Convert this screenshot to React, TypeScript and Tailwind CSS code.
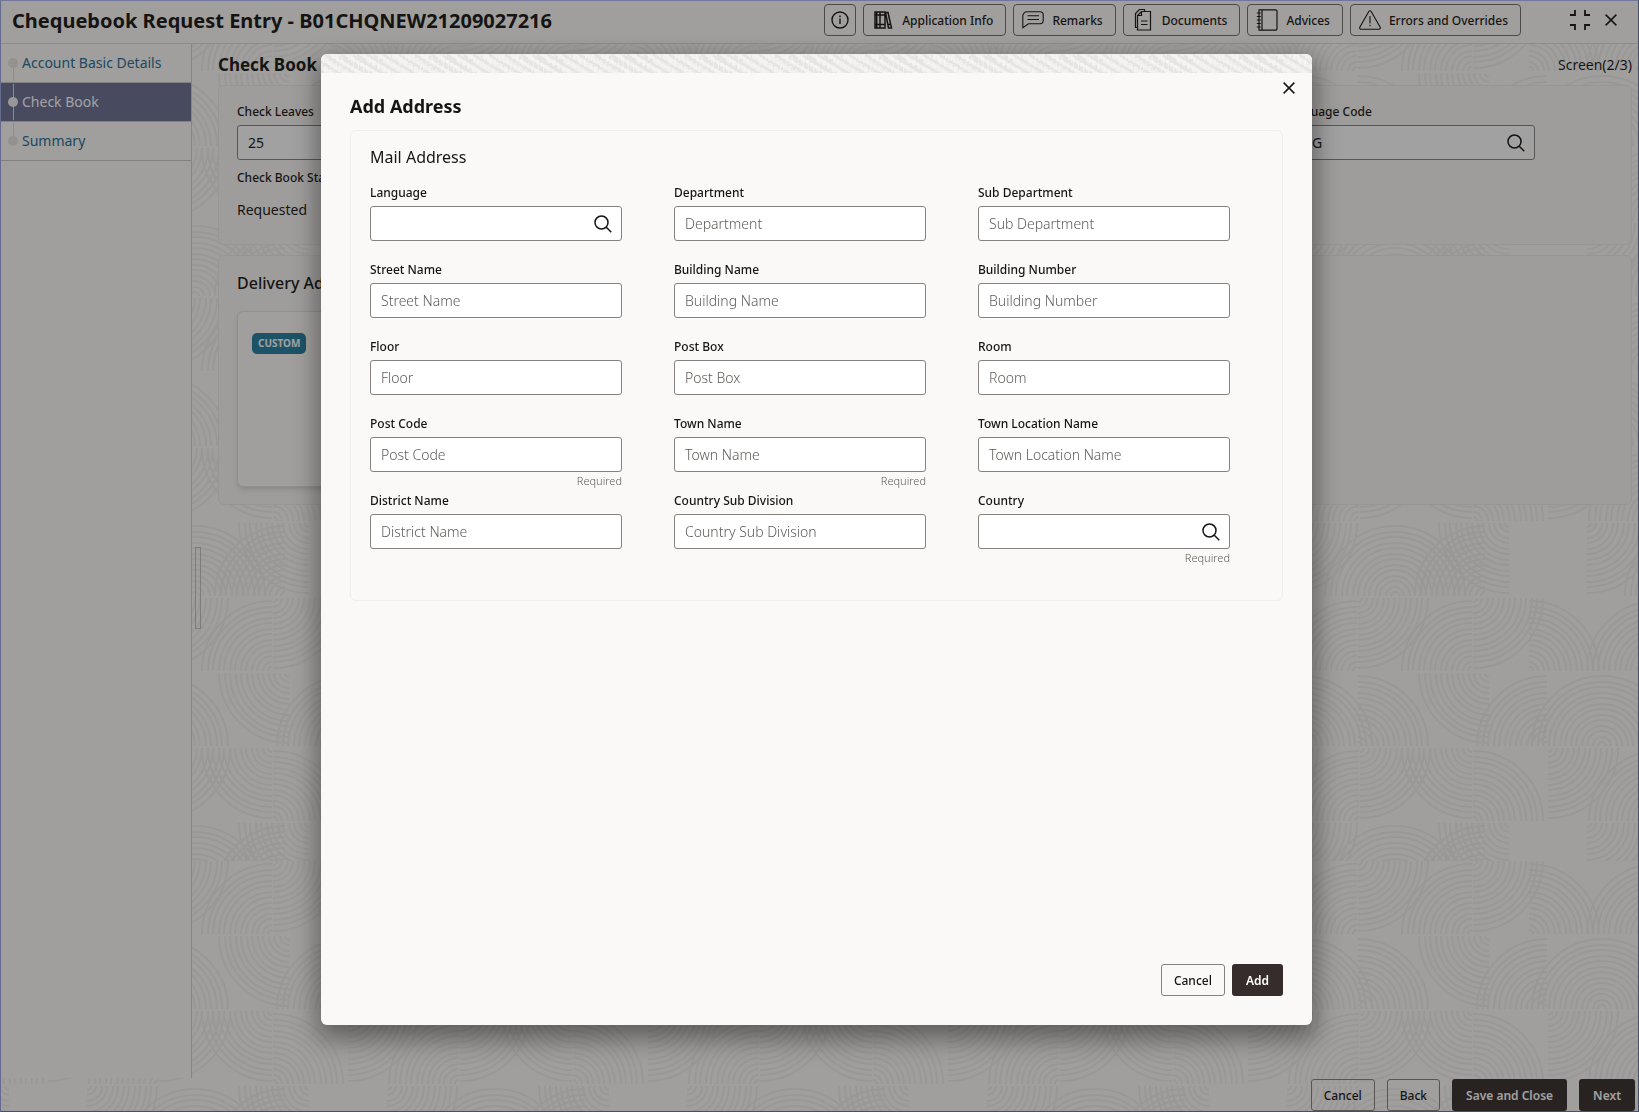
import { useState } from "react";
import type { ReactNode } from "react";

type Corner = "tl" | "tr" | "bl" | "br";

// one 300x300 wallpaper tile: four rows of quarter circles, [x of centre, corner]
const FAN_ROWS: [number, Corner][][] = [
  [[87, "tl"], [195, "br"], [195, "bl"], [9, "tr"], [285, "br"]],
  [[157, "br"], [158, "tl"], [272, "br"], [273, "tl"], [29, "bl"]],
  [[102, "bl"], [158, "bl"], [289, "tr"], [47, "br"], [102, "br"]],
  [[159, "br"], [160, "tl"], [272, "tr"], [273, "bl"], [48, "tl"]],
];
const RADII = [4, 9, 15, 20, 26, 31, 37, 42, 48, 53, 59, 64, 70];

const fanPath = (x: number, y: number, corner: Corner) => {
  const sx = corner[1] === "l" ? 1 : -1;
  const sy = corner[0] === "t" ? 1 : -1;
  const cy = corner[0] === "t" ? y : y + 73;
  const sweep = sx * sy > 0 ? 1 : 0;
  return RADII.map((r) => `M${x + sx * r} ${cy}A${r} ${r} 0 0 ${sweep} ${x} ${cy + sy * r}`).join("");
};

const WALLPAPER = FAN_ROWS.map((row, i) =>
  row.map(([x, c]) => [x - 300, x, x + 300].map((px) => fanPath(px, i * 75, c)).join("")).join("")
).join("");

const Wallpaper = () => (
  <svg className="absolute inset-0 h-full w-full" aria-hidden="true">
    <defs>
      <pattern id="fans-top" x="-1" y="179" width="300" height="300" patternUnits="userSpaceOnUse">
        <path d={WALLPAPER} fill="none" stroke="#f1f1ee" strokeWidth="2" />
      </pattern>
      <pattern id="fans-bottom" x="-1" y="742" width="300" height="300" patternUnits="userSpaceOnUse">
        <path d={WALLPAPER} fill="none" stroke="#f1f1ee" strokeWidth="2" />
      </pattern>
    </defs>
    <rect width="100%" height="817" fill="url(#fans-top)" />
    <rect y="817" width="100%" height="100%" fill="url(#fans-bottom)" />
  </svg>
);

const strokes = (count: number, seed: number) =>
  Array.from({ length: count }, (_, i) => {
    const x = (i * 37 + seed) % 90;
    const y = ((i * 7919 + seed * 31) % 101) % 19;
    return `M${x} ${y}v${3 + (i % 3)}`;
  }).join("");

const TextureStrip = () => (
  <svg className="h-[19px] w-full shrink-0" aria-hidden="true">
    <defs>
      <pattern id="strip" width="90" height="19" patternUnits="userSpaceOnUse">
        <rect width="90" height="19" fill="#f0efed" />
        <path d={strokes(170, 0)} stroke="#e6e5e3" strokeWidth="2" fill="none" />
        <path d={strokes(130, 11)} stroke="#f9f8f6" strokeWidth="1" fill="none" />
      </pattern>
    </defs>
    <rect width="100%" height="100%" fill="url(#strip)" />
  </svg>
);

const InfoIcon = () => (
  <svg width="18" height="18" viewBox="0 0 18 18" fill="none" stroke="#161513" strokeWidth="1.4">
    <circle cx="9" cy="9" r="8" />
    <path d="M9 7.5v5.5M9 4.6v1.6" />
  </svg>
);

const BooksIcon = () => (
  <svg width="20" height="20" viewBox="0 0 20 20" fill="none" stroke="#161513" strokeWidth="1.5">
    <path d="M2 2h5v16H2zM7 2h5v16H7zM2 5h10M2 14.500h10M3.700 2v16M12.500 2.500h2.500L18.500 18H15.500zM15.500 14.500h2.500" />
  </svg>
);

const RemarksIcon = () => (
  <svg width="22" height="18" viewBox="0 0 22 18" fill="none" stroke="#161513" strokeWidth="1.1">
    <path d="M5 .8h13a3.200 3.200 0 0 1 3.200 3.200v5.500a3.200 3.200 0 0 1-3.200 3.200H6.500L.8 16.800V5A4.200 4.200 0 0 1 5 .8z" />
    <path d="M5.500 4.800h11.500M5.500 8.500h11.500" />
  </svg>
);

const DocumentsIcon = () => (
  <svg width="18" height="22" viewBox="0 0 18 22" fill="none" stroke="#161513" strokeWidth="1.2">
    <path d="M7.500 2.500h9v18.500h-13V6.500zM7.500 2.500v4h-4M3.500 18.500h-2V4.500l4-4h5v2M7 12h6.500M7 15.500h6.500" />
  </svg>
);

const AdvicesIcon = () => (
  <svg width="22" height="22" viewBox="0 0 22 22" fill="none" stroke="#161513" strokeWidth="1.2">
    <path d="M3 .8h16.500a1.500 1.500 0 0 1 1.500 1.500v17.400a1.500 1.500 0 0 1-1.500 1.500H3zM6 .8v20.400M.8 4h4M.8 7.500h4M.8 11h4M.8 14.500h4M.8 18h4" />
  </svg>
);

const WarningIcon = () => (
  <svg width="22" height="20" viewBox="0 0 22 20" fill="none" stroke="#161513" strokeWidth="1.1">
    <path d="M9.800 1.500a1.400 1.400 0 0 1 2.400 0l9 15.800a1.300 1.300 0 0 1-1.100 1.900H1.900a1.300 1.300 0 0 1-1.100-1.900zM11 6v7.500M11 14.800v1.500" />
  </svg>
);

const CollapseIcon = () => (
  <svg width="20" height="20" viewBox="0 0 20 20" fill="none" stroke="#161513" strokeWidth="1.8">
    <path d="M5 0v5H0M15 0v5h5M5 20v-5H0M15 20v-5h5" />
  </svg>
);

const CloseIcon = () => (
  <svg width="12" height="12" viewBox="0 0 12 12" stroke="#161513" strokeWidth="1.5">
    <path d="M.6 .6l10.800 10.800M11.400 .6L.6 11.400" />
  </svg>
);

const SearchIcon = () => (
  <svg width="18" height="18" viewBox="0 0 18 18" fill="none" stroke="#161513" strokeWidth="1.5">
    <circle cx="7.500" cy="7.500" r="6.500" />
    <path d="M12 12l5.300 5.300" />
  </svg>
);

interface FieldProps {
  id: string;
  label: string;
  placeholder?: string;
  value?: string;
  search?: boolean;
  required?: boolean;
}

const Field = ({ id, label, placeholder, value = "", search, required }: FieldProps) => {
  const [text, setText] = useState(value);
  return (
    <div className="w-[252px]">
      <label htmlFor={id} className="block h-[22px] text-xs leading-[18px] font-medium">
        {label}
      </label>
      <div className="flex h-[35px] items-center rounded-[3px] border border-[#85817e] bg-white">
        <input
          id={id}
          value={text}
          placeholder={placeholder}
          onChange={(e) => setText(e.target.value)}
          className="h-full min-w-0 flex-1 bg-transparent px-2.5 text-sm outline-none placeholder:font-light placeholder:text-[#5f5c59]"
        />
        {search && (
          <button type="button" aria-label={`Search ${label}`} className="mr-[9px]">
            <SearchIcon />
          </button>
        )}
      </div>
      <p className="h-5 text-right text-[11px] leading-[18px] font-light text-[#5f5c59]">{required && "Required"}</p>
    </div>
  );
};

const ToolButton = ({ icon, children }: { icon: ReactNode; children: ReactNode }) => (
  <button type="button" className="flex h-8 items-center gap-2 rounded border border-[#716e6b] pr-3 pl-2 text-xs font-medium">
    <span className="flex w-[22px] justify-center">{icon}</span>
    <span className="pt-px">{children}</span>
  </button>
);

const Button = ({ primary, children }: { primary?: boolean; children: ReactNode }) => (
  <button
    type="button"
    className={
      primary
        ? "h-8 rounded-[3px] bg-[#352c2b] px-3.5 pt-px text-xs font-semibold text-white"
        : "h-8 rounded-[3px] border border-[#85817e] px-3 pt-px text-xs font-medium"
    }
  >
    {children}
  </button>
);

const steps = ["Account Basic Details", "Check Book", "Summary"];

const Sidebar = () => (
  <aside className="w-[191px] shrink-0 border-r border-[#d0d4cf] bg-[#fcfcf9]">
    <nav>
      {steps.map((step, i) => (
        <a
          key={step}
          href="#"
          className={`flex h-[39px] items-center gap-1 border-b border-[#cccac7] pl-[7px] text-sm ${
            i === 1 ? "bg-[#697193] text-white" : "text-[#226b95]"
          }`}
        >
          <svg width="10" height="38" viewBox="0 0 10 38" aria-hidden="true">
            {i > 0 && <path d="M5.500 1v18" stroke="#dedbd8" />}
            {i < 2 && <path d="M5.500 19v18" stroke="#dedbd8" />}
            <circle cx="5" cy="19" r="5" fill={i === 1 ? "#f1efed" : "#e8e6e3"} />
          </svg>
          {step}
        </a>
      ))}
    </nav>
  </aside>
);

const addressFields: FieldProps[] = [
  { id: "language", label: "Language", search: true },
  { id: "department", label: "Department", placeholder: "Department" },
  { id: "sub-department", label: "Sub Department", placeholder: "Sub Department" },
  { id: "street", label: "Street Name", placeholder: "Street Name" },
  { id: "building", label: "Building Name", placeholder: "Building Name" },
  { id: "building-number", label: "Building Number", placeholder: "Building Number" },
  { id: "floor", label: "Floor", placeholder: "Floor" },
  { id: "post-box", label: "Post Box", placeholder: "Post Box" },
  { id: "room", label: "Room", placeholder: "Room" },
  { id: "post-code", label: "Post Code", placeholder: "Post Code", required: true },
  { id: "town", label: "Town Name", placeholder: "Town Name", required: true },
  { id: "town-location", label: "Town Location Name", placeholder: "Town Location Name" },
  { id: "district", label: "District Name", placeholder: "District Name" },
  { id: "country-sub", label: "Country Sub Division", placeholder: "Country Sub Division" },
  { id: "country", label: "Country", search: true, required: true },
];

const AddAddressDialog = () => (
  <div className="fixed inset-0 flex items-start justify-center bg-[#161513]/40 pt-[54px] pr-[6px]">
    <div
      role="dialog"
      aria-labelledby="dialog-title"
      className="flex h-[calc(100vh-141px)] w-[991px] max-w-full flex-col overflow-hidden rounded-md bg-[#fbf9f8] shadow-[0_10px_24px_4px_rgba(0,0,0,0.4)]"
    >
      <TextureStrip />
      <div className="flex h-[27px] shrink-0 items-start justify-end pt-[9px] pr-[17px]">
        <button type="button" aria-label="Close dialog">
          <CloseIcon />
        </button>
      </div>
      <div className="flex flex-1 flex-col px-[29px] pb-[29px]">
        <h2 id="dialog-title" className="h-[30px] text-lg leading-3 font-bold">
          Add Address
        </h2>
        <section className="h-[471px] rounded-md border border-[#f1efed] pt-3.5 pl-[19px]">
          <h3 className="mb-[15px] text-base leading-6">Mail Address</h3>
          <div className="grid grid-cols-3">
            {addressFields.map((f) => (
              <Field key={f.id} {...f} />
            ))}
          </div>
        </section>
        <div className="mt-auto flex justify-end gap-[7px]">
          <Button>Cancel</Button>
          <Button primary>Add</Button>
        </div>
      </div>
    </div>
  </div>
);

export default function App() {
  return (
    <div className="flex min-h-screen flex-col border border-t-[#b0b8f5] border-r-[#6b76a8] border-b-[#6b76a8] border-l-[#9aa5df] bg-[#fcfcf9] font-['Noto_Sans',sans-serif] text-[#161513]">
      <header className="flex h-[43px] items-start justify-between border-b border-[#dedcda] pt-[3px] pl-[11px]">
        <h1 className="text-xl leading-[34px] font-bold">Chequebook Request Entry - B01CHQNEW21209027216</h1>
        <div className="flex items-center gap-[7px] pr-[21px]">
          <button type="button" aria-label="Information" className="flex h-8 w-8 items-center justify-center rounded border border-[#716e6b]">
            <InfoIcon />
          </button>
          <ToolButton icon={<BooksIcon />}>Application Info</ToolButton>
          <ToolButton icon={<RemarksIcon />}>Remarks</ToolButton>
          <ToolButton icon={<DocumentsIcon />}>Documents</ToolButton>
          <ToolButton icon={<AdvicesIcon />}>Advices</ToolButton>
          <ToolButton icon={<WarningIcon />}>Errors and Overrides</ToolButton>
          <button type="button" aria-label="Collapse" className="ml-[42px]">
            <CollapseIcon />
          </button>
          <button type="button" aria-label="Close" className="ml-2">
            <CloseIcon />
          </button>
        </div>
      </header>

      <div className="relative flex flex-1 flex-col">
        <Wallpaper />
        <div className="relative flex flex-1">
          <Sidebar />
          <div className="mt-auto mb-[449px] ml-[3px] h-[82px] w-1.5 shrink-0 border border-[#c4c1be]" />
          <main className="ml-[17px] flex-1 pr-[6px]">
            <div className="flex h-[41px] items-center justify-between">
              <h2 className="text-[17px] font-bold">Check Book</h2>
              <span className="text-sm">Screen(2/3)</span>
            </div>
            <section className="h-40 rounded-md border border-[#efedeb] bg-[#faf8f5] pt-[17px] pl-[18px]">
              <div className="grid grid-cols-4">
                <Field id="leaves" label="Check Leaves" value="25" />
                <div className="col-span-2" />
                <Field id="language-code" label="Language Code" value="ENG" search />
              </div>
              <p className="-mt-[11px] text-xs leading-[18px] font-medium">Check Book Status</p>
              <p className="mt-[13px] text-sm">Requested</p>
            </section>
            <section className="mt-2.5 h-[250px] rounded-md border border-[#efedeb] bg-[#faf8f5] pt-[15px] pl-[18px]">
              <h3 className="text-base font-medium">Delivery Address</h3>
              <div className="mt-4 h-44 w-80 rounded-md border border-[#e4e1dd] bg-[#fcfcf9] px-3.5 pt-[21px] shadow-md">
                <span className="block w-fit rounded-[5px] bg-[#227e9e] px-1.5 text-[10px] leading-[21px] font-bold text-white">CUSTOM</span>
              </div>
            </section>
          </main>
        </div>
        <footer className="relative flex h-[33px] items-end justify-end gap-3 pr-[3px]">
          <Button>Cancel</Button>
          <Button>Back</Button>
          <Button primary>Save and Close</Button>
          <Button primary>Next</Button>
        </footer>
      </div>

      <AddAddressDialog />
    </div>
  );
}
